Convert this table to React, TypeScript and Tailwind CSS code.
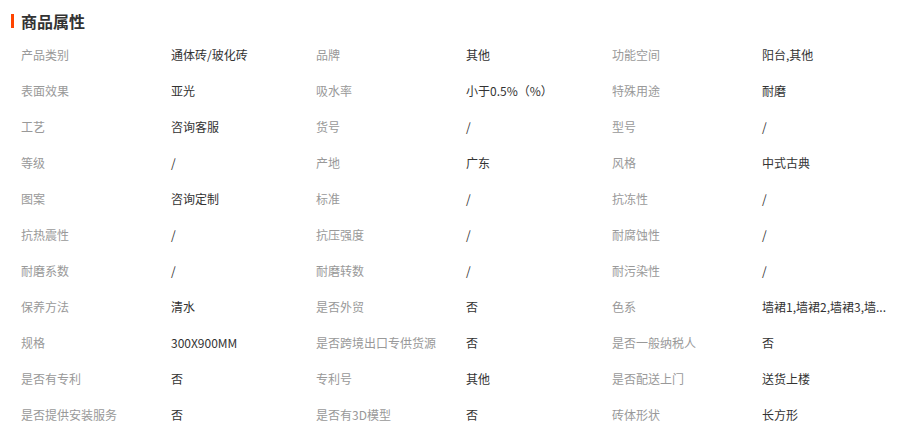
import React from "react";

const rows: [string, string, string, string, string, string][] = [
  ["产品类别", "通体砖/玻化砖", "品牌", "其他", "功能空间", "阳台,其他"],
  ["表面效果", "亚光", "吸水率", "小于0.5%（%）", "特殊用途", "耐磨"],
  ["工艺", "咨询客服", "货号", "/", "型号", "/"],
  ["等级", "/", "产地", "广东", "风格", "中式古典"],
  ["图案", "咨询定制", "标准", "/", "抗冻性", "/"],
  ["抗热震性", "/", "抗压强度", "/", "耐腐蚀性", "/"],
  ["耐磨系数", "/", "耐磨转数", "/", "耐污染性", "/"],
  ["保养方法", "清水", "是否外贸", "否", "色系", "墙裙1,墙裙2,墙裙3,墙..."],
  ["规格", "300X900MM", "是否跨境出口专供货源", "否", "是否一般纳税人", "否"],
  ["是否有专利", "否", "专利号", "其他", "是否配送上门", "送货上楼"],
  ["是否提供安装服务", "否", "是否有3D模型", "否", "砖体形状", "长方形"],
];

export default function App() {
  return (
    <div
      className="w-[906px] h-[448px] bg-white overflow-hidden"
      style={{ fontFamily: '"Microsoft YaHei", "Noto Sans CJK SC", sans-serif' }}
    >
      <div className="flex items-center pl-[11px] pt-[12px] h-[29px]">
        <div className="w-[3px] h-[14px] bg-[#ff4400]" />
        <div className="ml-[7px] text-[16px] font-bold text-[#333] leading-[16px]">商品属性</div>
      </div>
      <div className="pl-[21px] pt-[8px]">
        {rows.map((r, i) => (
          <div key={i} className="flex h-[36px] items-center text-[12px] leading-[16px]">
            <div className="w-[150px] text-[#999]">{r[0]}</div>
            <div className="w-[145px] text-[#333]">{r[1]}</div>
            <div className="w-[150px] text-[#999]">{r[2]}</div>
            <div className="w-[146px] text-[#333]">{r[3]}</div>
            <div className="w-[150px] text-[#999]">{r[4]}</div>
            <div className="w-[140px] text-[#333] whitespace-nowrap">{r[5]}</div>
          </div>
        ))}
      </div>
    </div>
  );
}
